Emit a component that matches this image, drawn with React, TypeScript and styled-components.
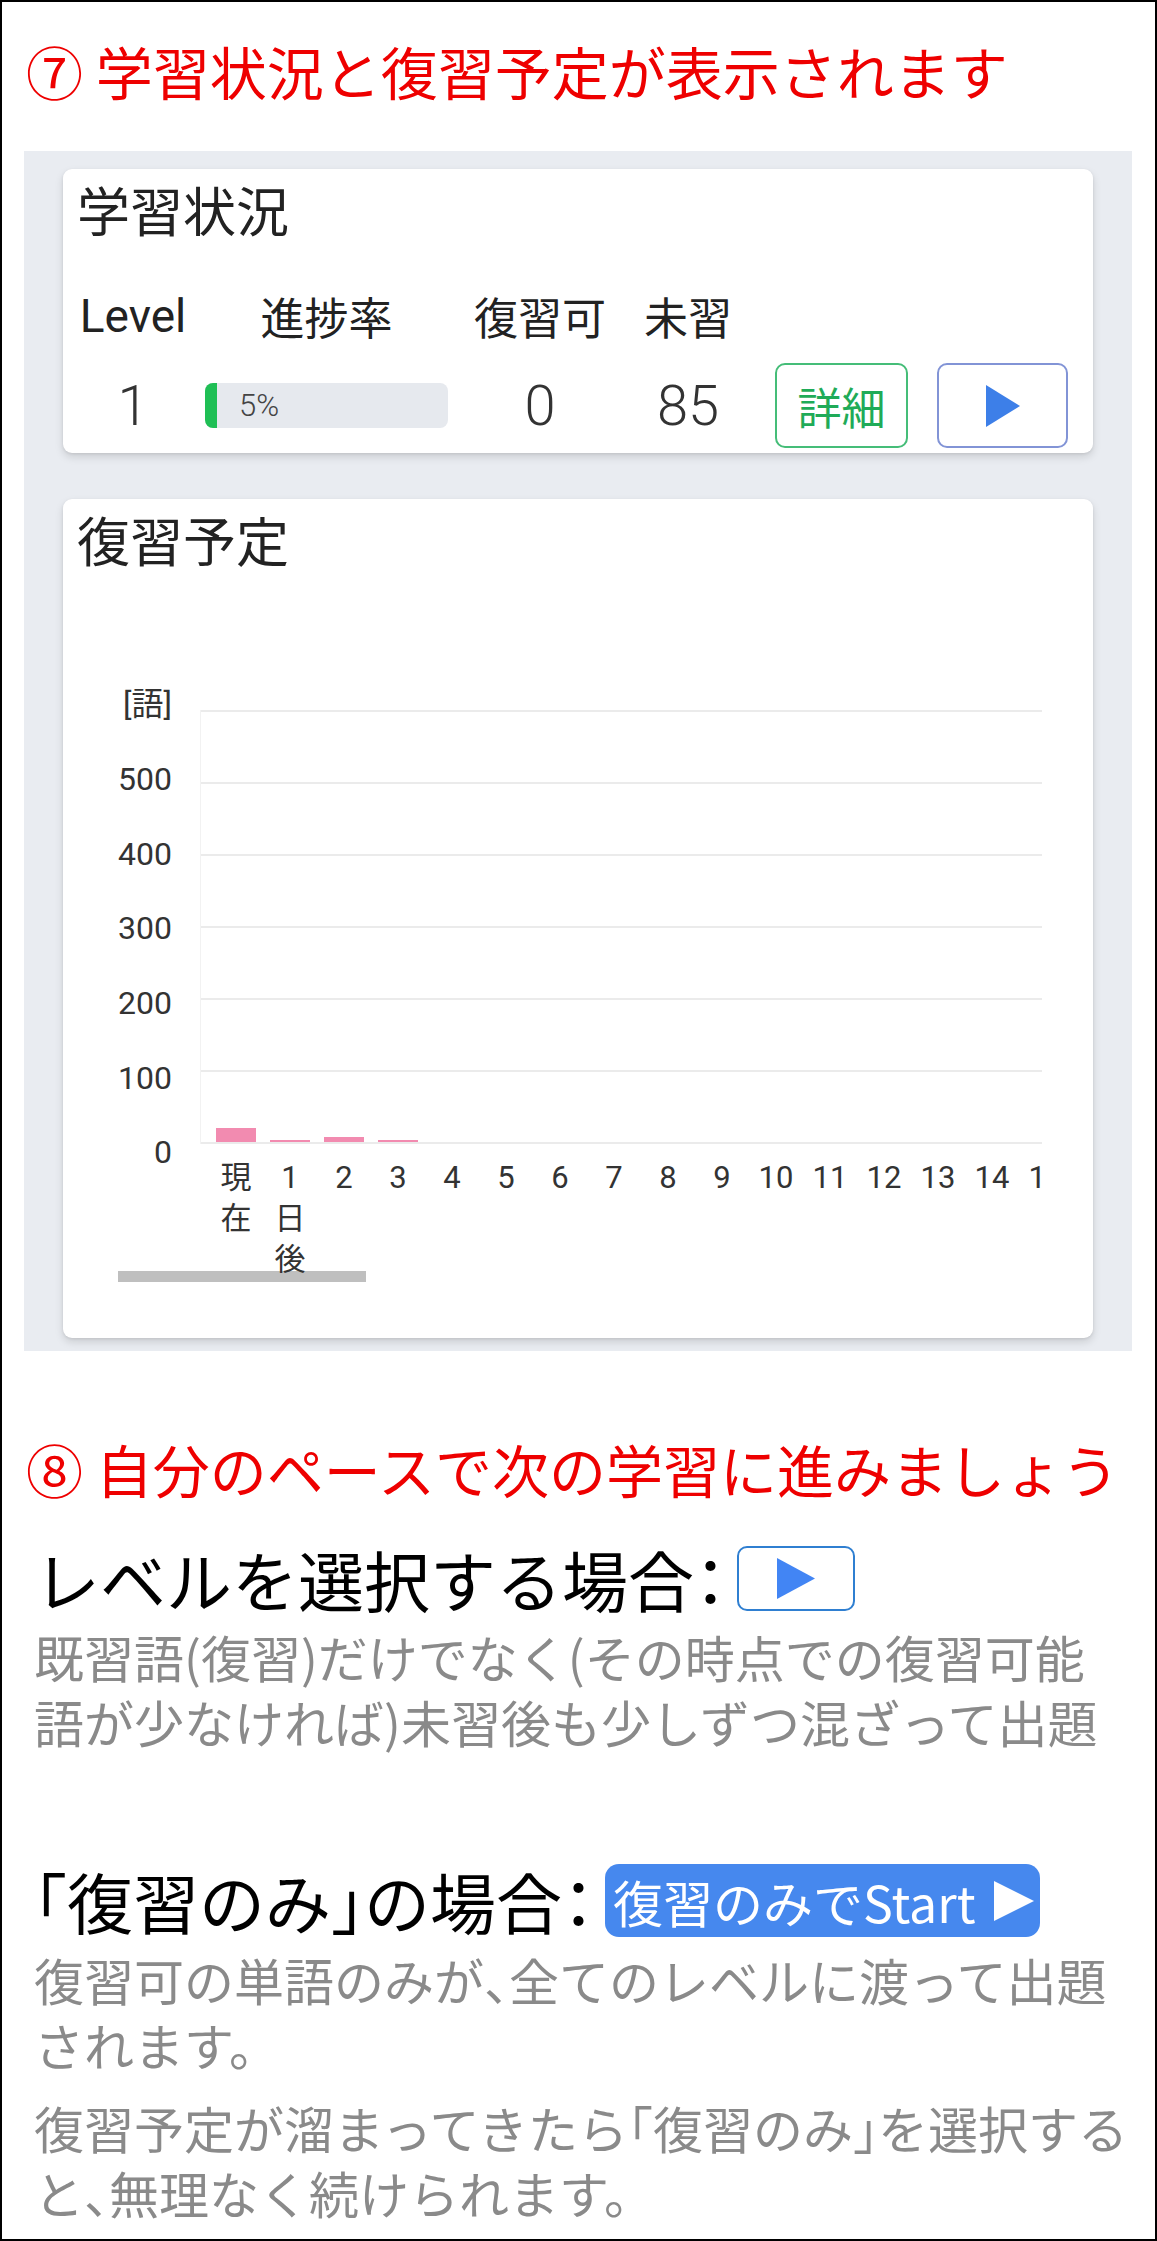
import React from "react";
import styled, { createGlobalStyle } from "styled-components";

const GlobalStyle = createGlobalStyle`
  html, body {
    margin: 0;
    padding: 0;
    background: #fff;
  }
  body {
    font-family: "Noto Sans CJK JP", "Noto Sans", sans-serif;
  }
  * {
    box-sizing: border-box;
  }
`;

const Page = styled.div`
  width: 1157px;
  height: 2241px;
  border: 2px solid #000;
  overflow: hidden;
  background: #fff;
`;

const StepTitle = styled.h2<{ $mt: number }>`
  margin: ${({ $mt }) => $mt}px 0 0;
  padding-left: 24px;
  font-size: 57px;
  font-weight: 400;
  line-height: 1;
  color: #ee0000;
  white-space: nowrap;
`;

const Panel = styled.section`
  margin: 52px 0 0 22px;
  width: 1108px;
  padding: 18px 39px 13px;
  background: #e9ecf1;
  display: flex;
  flex-direction: column;
  gap: 46px;
`;

const Card = styled.div<{ $pb: number }>`
  background: #fff;
  border-radius: 9px;
  padding: 14px 0 ${({ $pb }) => $pb}px;
  box-shadow: 0 4px 8px rgba(0, 0, 0, 0.13), 0 1px 3px rgba(0, 0, 0, 0.08);
`;

const CardTitle = styled.h3`
  margin: 0;
  padding-left: 14px;
  font-size: 53px;
  font-weight: 400;
  line-height: 52px;
  color: #222;
`;

const StatusGrid = styled.div`
  margin-top: 59px;
  display: grid;
  grid-template-columns: 140px 247px 180px 116px 162px 160px;
  grid-template-rows: 44px 85px;
  row-gap: 25px;
  align-items: center;
  justify-items: center;
`;

const HeadCell = styled.div<{ $latin?: boolean }>`
  font-family: ${({ $latin }) =>
    $latin ? 'Roboto, "Noto Sans CJK JP", sans-serif' : '"Noto Sans CJK JP", sans-serif'};
  font-size: ${({ $latin }) => ($latin ? 46 : 44)}px;
  line-height: 44px;
  color: #222;
  white-space: nowrap;
`;

const ValueCell = styled.div`
  font-family: Roboto, "Noto Sans CJK JP", sans-serif;
  font-size: 56px;
  font-weight: 300;
  line-height: 1;
  color: #333;
`;

const ProgressTrack = styled.div`
  width: 243px;
  height: 45px;
  border-radius: 8px;
  background: #e6e9ee;
  overflow: hidden;
  display: flex;
  align-items: center;
`;

const ProgressFill = styled.div`
  align-self: stretch;
  background: #1fbf55;
`;

const ProgressLabel = styled.span`
  margin-left: 22px;
  font-family: Roboto, sans-serif;
  font-size: 31px;
  font-weight: 300;
  color: #444;
`;

const DetailButton = styled.button`
  justify-self: end;
  width: 133px;
  height: 85px;
  border: 2px solid #45bd78;
  border-radius: 10px;
  background: #fff;
  color: #1fab58;
  font-family: "Noto Sans CJK JP", sans-serif;
  font-size: 44px;
  line-height: 1;
  padding: 0;
`;

const PlayButton = styled.button<{ $w: number; $h: number; $border: string }>`
  justify-self: end;
  width: ${({ $w }) => $w}px;
  height: ${({ $h }) => $h}px;
  border: 2px solid ${({ $border }) => $border};
  border-radius: 10px;
  background: #fff;
  padding: 0;
  display: inline-flex;
  align-items: center;
  justify-content: center;
  flex-shrink: 0;
`;

const ChartRow = styled.div`
  margin-top: 102px;
  display: flex;
`;

const YAxis = styled.div`
  flex: 0 0 137px;
  padding-right: 28px;
  display: flex;
  flex-direction: column;
  align-items: flex-end;
`;

const YLabel = styled.div`
  height: 74.7px;
  display: flex;
  align-items: center;
  font-family: Roboto, "Noto Sans CJK JP", sans-serif;
  font-size: 32px;
  line-height: 1;
  color: #333;
`;

const ChartBody = styled.div`
  flex: 0 0 842px;
  overflow: hidden;
  padding-top: 43px;
`;

const ChartInner = styled.div`
  width: 1200px;
`;

const Plot = styled.div`
  height: 434px;
  padding: 0 0 2px 8px;
  border-left: 1px solid #f2f2f2;
  background-image: linear-gradient(to bottom, #ebebeb 0, #ebebeb 2px, transparent 2px);
  background-size: 100% 72px;
  display: flex;
  align-items: flex-end;
`;

const Slot = styled.div`
  flex: 0 0 54px;
  display: flex;
  justify-content: center;
`;

const Bar = styled.div`
  width: 40px;
  background: #f28bb0;
`;

const XAxis = styled.div`
  margin-top: 13px;
  height: 123px;
  padding-left: 9px;
  display: flex;
  align-items: flex-start;
`;

const XLabel = styled.div`
  flex: 0 0 54px;
  display: flex;
  justify-content: center;
`;

const XText = styled.span`
  width: 40px;
  text-align: center;
  font-family: Roboto, "Noto Sans CJK JP", sans-serif;
  font-size: 31px;
  line-height: 41px;
  color: #333;
  word-break: break-all;
`;

const ScrollThumb = styled.div`
  margin: -9px 0 0 55px;
  width: 248px;
  height: 11px;
  background: #bfbfbf;
`;

const Guide = styled.section`
  padding-left: 32px;
`;

const HeadingRow = styled.div<{ $mt: number }>`
  margin-top: ${({ $mt }) => $mt}px;
  display: flex;
  align-items: center;
  gap: 10px;
`;

const HeadingText = styled.span`
  font-size: 66px;
  line-height: 65px;
  color: #000;
  white-space: nowrap;
`;

const Desc = styled.p<{ $mt: number }>`
  margin: ${({ $mt }) => $mt}px 0 0;
  font-size: 50px;
  line-height: 65px;
  color: #8a8a8a;
  white-space: nowrap;
`;

const Punct = styled.span`
  font-feature-settings: "halt";
`;

const StartButton = styled.span`
  height: 73px;
  padding: 0 6px 0 8px;
  border-radius: 14px;
  background: #4688ee;
  color: #fff;
  font-size: 50px;
  line-height: 1;
  display: inline-flex;
  align-items: center;
  gap: 18px;
  white-space: nowrap;
`;

const Triangle = ({ w, h, color }: { w: number; h: number; color: string }) => (
  <svg width={w} height={h} viewBox={`0 0 ${w} ${h}`}>
    <polygon points={`0,0 ${w},${h / 2} 0,${h}`} fill={color} />
  </svg>
);

const yLabels = ["[語]", "500", "400", "300", "200", "100", "0"];
const reviewCounts = [20, 1, 7, 1, 0, 0, 0, 0, 0, 0, 0, 0, 0, 0, 0, 0, 0, 0, 0, 0];
const xLabels = ["現在", "1日後", "2", "3", "4", "5", "6", "7", "8", "9", "10", "11", "12", "13", "14", "15"];

const barHeight = (n: number) => (n === 0 ? 0 : Math.max(2, n * 0.72));

export default function App() {
  return (
    <>
      <GlobalStyle />
      <Page>
        <StepTitle $mt={40}>⑦ 学習状況と復習予定が表示されます</StepTitle>

        <Panel>
          <Card $pb={5}>
            <CardTitle>学習状況</CardTitle>
            <StatusGrid>
              <HeadCell $latin>Level</HeadCell>
              <HeadCell>進捗率</HeadCell>
              <HeadCell>復習可</HeadCell>
              <HeadCell>未習</HeadCell>
              <span />
              <span />

              <ValueCell>1</ValueCell>
              <ProgressTrack>
                <ProgressFill style={{ width: "12px" }} />
                <ProgressLabel>5%</ProgressLabel>
              </ProgressTrack>
              <ValueCell>0</ValueCell>
              <ValueCell>85</ValueCell>
              <DetailButton>詳細</DetailButton>
              <PlayButton $w={131} $h={85} $border="#8294d6">
                <Triangle w={34} h={42} color="#3d7fe8" />
              </PlayButton>
            </StatusGrid>
          </Card>

          <Card $pb={56}>
            <CardTitle>復習予定</CardTitle>
            <ChartRow>
              <YAxis>
                {yLabels.map((l) => (
                  <YLabel key={l}>{l}</YLabel>
                ))}
              </YAxis>
              <ChartBody>
                <ChartInner>
                  <Plot>
                    {reviewCounts.map((n, i) => (
                      <Slot key={i}>
                        <Bar style={{ height: `${barHeight(n)}px` }} />
                      </Slot>
                    ))}
                  </Plot>
                  <XAxis>
                    {xLabels.map((l) => (
                      <XLabel key={l}>
                        <XText>{l}</XText>
                      </XLabel>
                    ))}
                  </XAxis>
                </ChartInner>
              </ChartBody>
            </ChartRow>
            <ScrollThumb />
          </Card>
        </Panel>

        <StepTitle $mt={89}>⑧ 自分のペースで次の学習に進みましょう</StepTitle>

        <Guide>
          <HeadingRow $mt={49}>
            <HeadingText>
              レベルを選択する場合<Punct>：</Punct>
            </HeadingText>
            <PlayButton $w={118} $h={65} $border="#2f7fd1">
              <Triangle w={38} h={41} color="#4285f4" />
            </PlayButton>
          </HeadingRow>
          <Desc $mt={13}>
            既習語(復習)だけでなく(その時点での復習可能
            <br />
            語が少なければ)未習後も少しずつ混ざって出題
          </Desc>

          <HeadingRow $mt={110}>
            <HeadingText>
              <Punct>「</Punct>復習のみ<Punct>」</Punct>の場合<Punct>：</Punct>
            </HeadingText>
            <StartButton>
              復習のみでStart
              <Triangle w={40} h={40} color="#fff" />
            </StartButton>
          </HeadingRow>
          <Desc $mt={10}>
            復習可の単語のみが<Punct>、</Punct>全てのレベルに渡って出題
            <br />
            されます。
          </Desc>
          <Desc $mt={18}>
            復習予定が溜まってきたら<Punct>「</Punct>復習のみ<Punct>」</Punct>を選択する
            <br />
            と<Punct>、</Punct>無理なく続けられます。
          </Desc>
        </Guide>
      </Page>
    </>
  );
}
